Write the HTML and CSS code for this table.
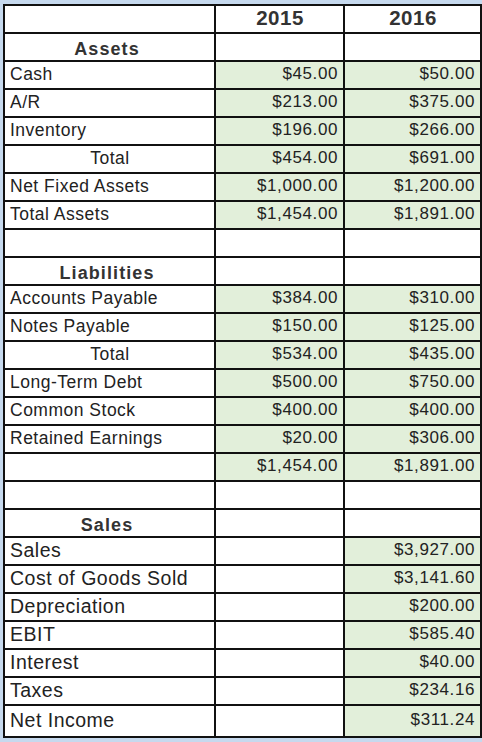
FILE: index.html
```html
<!DOCTYPE html>
<html>
<head>
<meta charset="utf-8">
<link rel="stylesheet" href="styles.css">
</head>
<body>
<div class="sheet">
<table class="grid">
<colgroup><col class="c1"><col class="c2"><col class="c3"></colgroup>
<tr class="row"><td></td><td class="year">2015</td><td class="year">2016</td></tr>
<tr class="row"><td class="section">Assets</td><td></td><td></td></tr>
<tr class="row"><td class="label">Cash</td><td class="val fill">$45.00</td><td class="val fill">$50.00</td></tr>
<tr class="row"><td class="label">A/R</td><td class="val fill">$213.00</td><td class="val fill">$375.00</td></tr>
<tr class="row"><td class="label">Inventory</td><td class="val fill">$196.00</td><td class="val fill">$266.00</td></tr>
<tr class="row"><td class="label center">Total</td><td class="val fill">$454.00</td><td class="val fill">$691.00</td></tr>
<tr class="row"><td class="label">Net Fixed Assets</td><td class="val fill">$1,000.00</td><td class="val fill">$1,200.00</td></tr>
<tr class="row"><td class="label">Total Assets</td><td class="val fill">$1,454.00</td><td class="val fill">$1,891.00</td></tr>
<tr class="row"><td></td><td></td><td></td></tr>
<tr class="row"><td class="section">Liabilities</td><td></td><td></td></tr>
<tr class="row"><td class="label">Accounts Payable</td><td class="val fill">$384.00</td><td class="val fill">$310.00</td></tr>
<tr class="row"><td class="label">Notes Payable</td><td class="val fill">$150.00</td><td class="val fill">$125.00</td></tr>
<tr class="row"><td class="label center">Total</td><td class="val fill">$534.00</td><td class="val fill">$435.00</td></tr>
<tr class="row"><td class="label">Long-Term Debt</td><td class="val fill">$500.00</td><td class="val fill">$750.00</td></tr>
<tr class="row"><td class="label">Common Stock</td><td class="val fill">$400.00</td><td class="val fill">$400.00</td></tr>
<tr class="row"><td class="label">Retained Earnings</td><td class="val fill">$20.00</td><td class="val fill">$306.00</td></tr>
<tr class="row"><td></td><td class="val fill">$1,454.00</td><td class="val fill">$1,891.00</td></tr>
<tr class="row"><td></td><td></td><td></td></tr>
<tr class="row"><td class="section">Sales</td><td></td><td></td></tr>
<tr class="row"><td class="label big">Sales</td><td></td><td class="val fill">$3,927.00</td></tr>
<tr class="row"><td class="label big">Cost of Goods Sold</td><td></td><td class="val fill">$3,141.60</td></tr>
<tr class="row"><td class="label big">Depreciation</td><td></td><td class="val fill">$200.00</td></tr>
<tr class="row"><td class="label big">EBIT</td><td></td><td class="val fill">$585.40</td></tr>
<tr class="row"><td class="label big">Interest</td><td></td><td class="val fill">$40.00</td></tr>
<tr class="row"><td class="label big">Taxes</td><td></td><td class="val fill">$234.16</td></tr>
<tr class="row last"><td class="label big">Net Income</td><td></td><td class="val fill">$311.24</td></tr>
</table>
</div>
</body>
</html>
```

FILE: styles.css
```css
html, body {
  margin: 0;
  padding: 0;
  background: #c6d9ee;
}
.sheet {
  padding: 4px 0 0 3px;
}
.grid {
  border-collapse: collapse;
  table-layout: fixed;
  width: 477px;
  background: #ffffff;
  font-family: "Liberation Sans", Arial, sans-serif;
  color: #222222;
}
.c1 { width: 211px; }
.c2 { width: 129px; }
.c3 { width: 137px; }
.row { height: 28px; }
.row.last { height: 32px; }
.grid td {
  border: 2px solid #111111;
  padding: 0 4px 2px 5px;
  font-size: 17.5px;
  letter-spacing: 0.5px;
  white-space: nowrap;
  overflow: hidden;
  vertical-align: middle;
  line-height: 20px;
}
.grid td.year {
  text-align: center;
  font-weight: bold;
  font-size: 20.5px;
  letter-spacing: 0.5px;
  color: #333333;
}
.grid td.section {
  text-align: center;
  font-weight: bold;
  font-size: 18px;
  letter-spacing: 1.1px;
  color: #333333;
  vertical-align: bottom;
  padding: 0 8px 1px 3px;
}
.grid td.label.center { text-align: center; }
.grid td.label.big {
  font-size: 19.5px;
  letter-spacing: 0.5px;
}
.grid td.val {
  text-align: right;
  padding-right: 5px;
  font-size: 17px;
  letter-spacing: 0.6px;
}
.grid td.fill { background: #e2efda; }
```
